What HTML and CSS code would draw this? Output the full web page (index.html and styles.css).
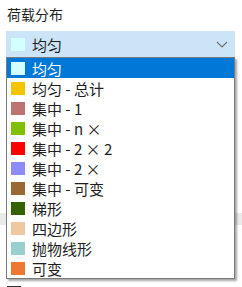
FILE: index.html
```html
<!DOCTYPE html>
<html lang="zh-CN">
<head>
    <meta charset="UTF-8">
    <title>荷载分布</title>
    <link rel="stylesheet" href="styles.css">
</head>
<body>
    <div class="panel">
        <div class="caption">荷载分布</div>
        <div class="combo">
            <span class="sw" style="background:#d4ffff"></span>
            <span class="txt">均匀</span>
            <svg class="chev" width="12" height="7" viewBox="0 0 12 7">
                <path d="M1 1 L6 6 L11 1" fill="none" stroke="#707070" stroke-width="1.1"/>
            </svg>
        </div>

        <!-- content under the open list -->
        <div class="under">
            <div class="gap"></div>
            <div class="band"></div>
            <div class="gap2"></div>
            <label class="check"><span class="box"></span>显示荷载分布</label>
        </div>

        <ul class="list">
            <li class="sel"><span class="sw" style="background:#d4ffff"></span>均匀</li>
            <li><span class="sw" style="background:#f5c400"></span>均匀 - 总计</li>
            <li><span class="sw" style="background:#bf7272"></span>集中 - 1</li>
            <li><span class="sw" style="background:#80c000"></span>集中 - n ×</li>
            <li><span class="sw" style="background:#ff0000"></span>集中 - 2 × 2</li>
            <li><span class="sw" style="background:#8c8cff"></span>集中 - 2 ×</li>
            <li><span class="sw" style="background:#9a6832"></span>集中 - 可变</li>
            <li><span class="sw" style="background:#356200"></span>梯形</li>
            <li><span class="sw" style="background:#efc8a2"></span>四边形</li>
            <li><span class="sw" style="background:#9acfd0"></span>抛物线形</li>
            <li><span class="sw" style="background:#ee7733"></span>可变</li>
        </ul>
    </div>
</body>
</html>
```

FILE: styles.css
```css
body {
    margin: 0;
    background: white;
    font-family: "Noto Sans CJK SC", "Noto Sans", sans-serif;
    font-size: 14px;
    color: #1e1e1e;
}

.panel {
    position: relative;
    width: 242px;
    height: 287px;
    overflow: hidden;
}

.caption {
    padding: 4px 0 0 7px;
    height: 27px;
    line-height: 20px;
}

.combo {
    display: flex;
    align-items: center;
    margin-left: 6px;
    width: 229px;
    height: 26px;
    background: #cce4f7;
    font-size: 15px;
}

.combo .sw {
    margin-left: 5px;
}

.combo .txt {
    margin-left: 7px;
    flex: 1;
}

.chev {
    margin-right: 7px;
}

.sw {
    display: inline-block;
    width: 14px;
    height: 13px;
    flex-shrink: 0;
}

.under .gap {
    height: 156px;
}

.band {
    height: 12px;
    background: #ebebeb;
}

.gap2 {
    height: 58px;
}

.check {
    display: flex;
    align-items: center;
    gap: 6px;
    padding-left: 7px;
    font-size: 13px;
}

.box {
    width: 12px;
    height: 12px;
    border: 1px solid #333;
    background: white;
}

.list {
    position: absolute;
    top: 57px;
    left: 6px;
    width: 227px;
    margin: 0;
    padding: 0;
    list-style: none;
    background: white;
    border: 1px solid #7a7a7a;
    box-shadow: 2px 2px 2px rgba(0, 0, 0, 0.35);
    font-size: 15px;
}

.list li {
    display: flex;
    align-items: center;
    height: 20px;
    padding-left: 4px;
    white-space: nowrap;
}

.list li .sw {
    margin-right: 7px;
}

.list li.sel {
    background: #0078d7;
    color: white;
}
```
